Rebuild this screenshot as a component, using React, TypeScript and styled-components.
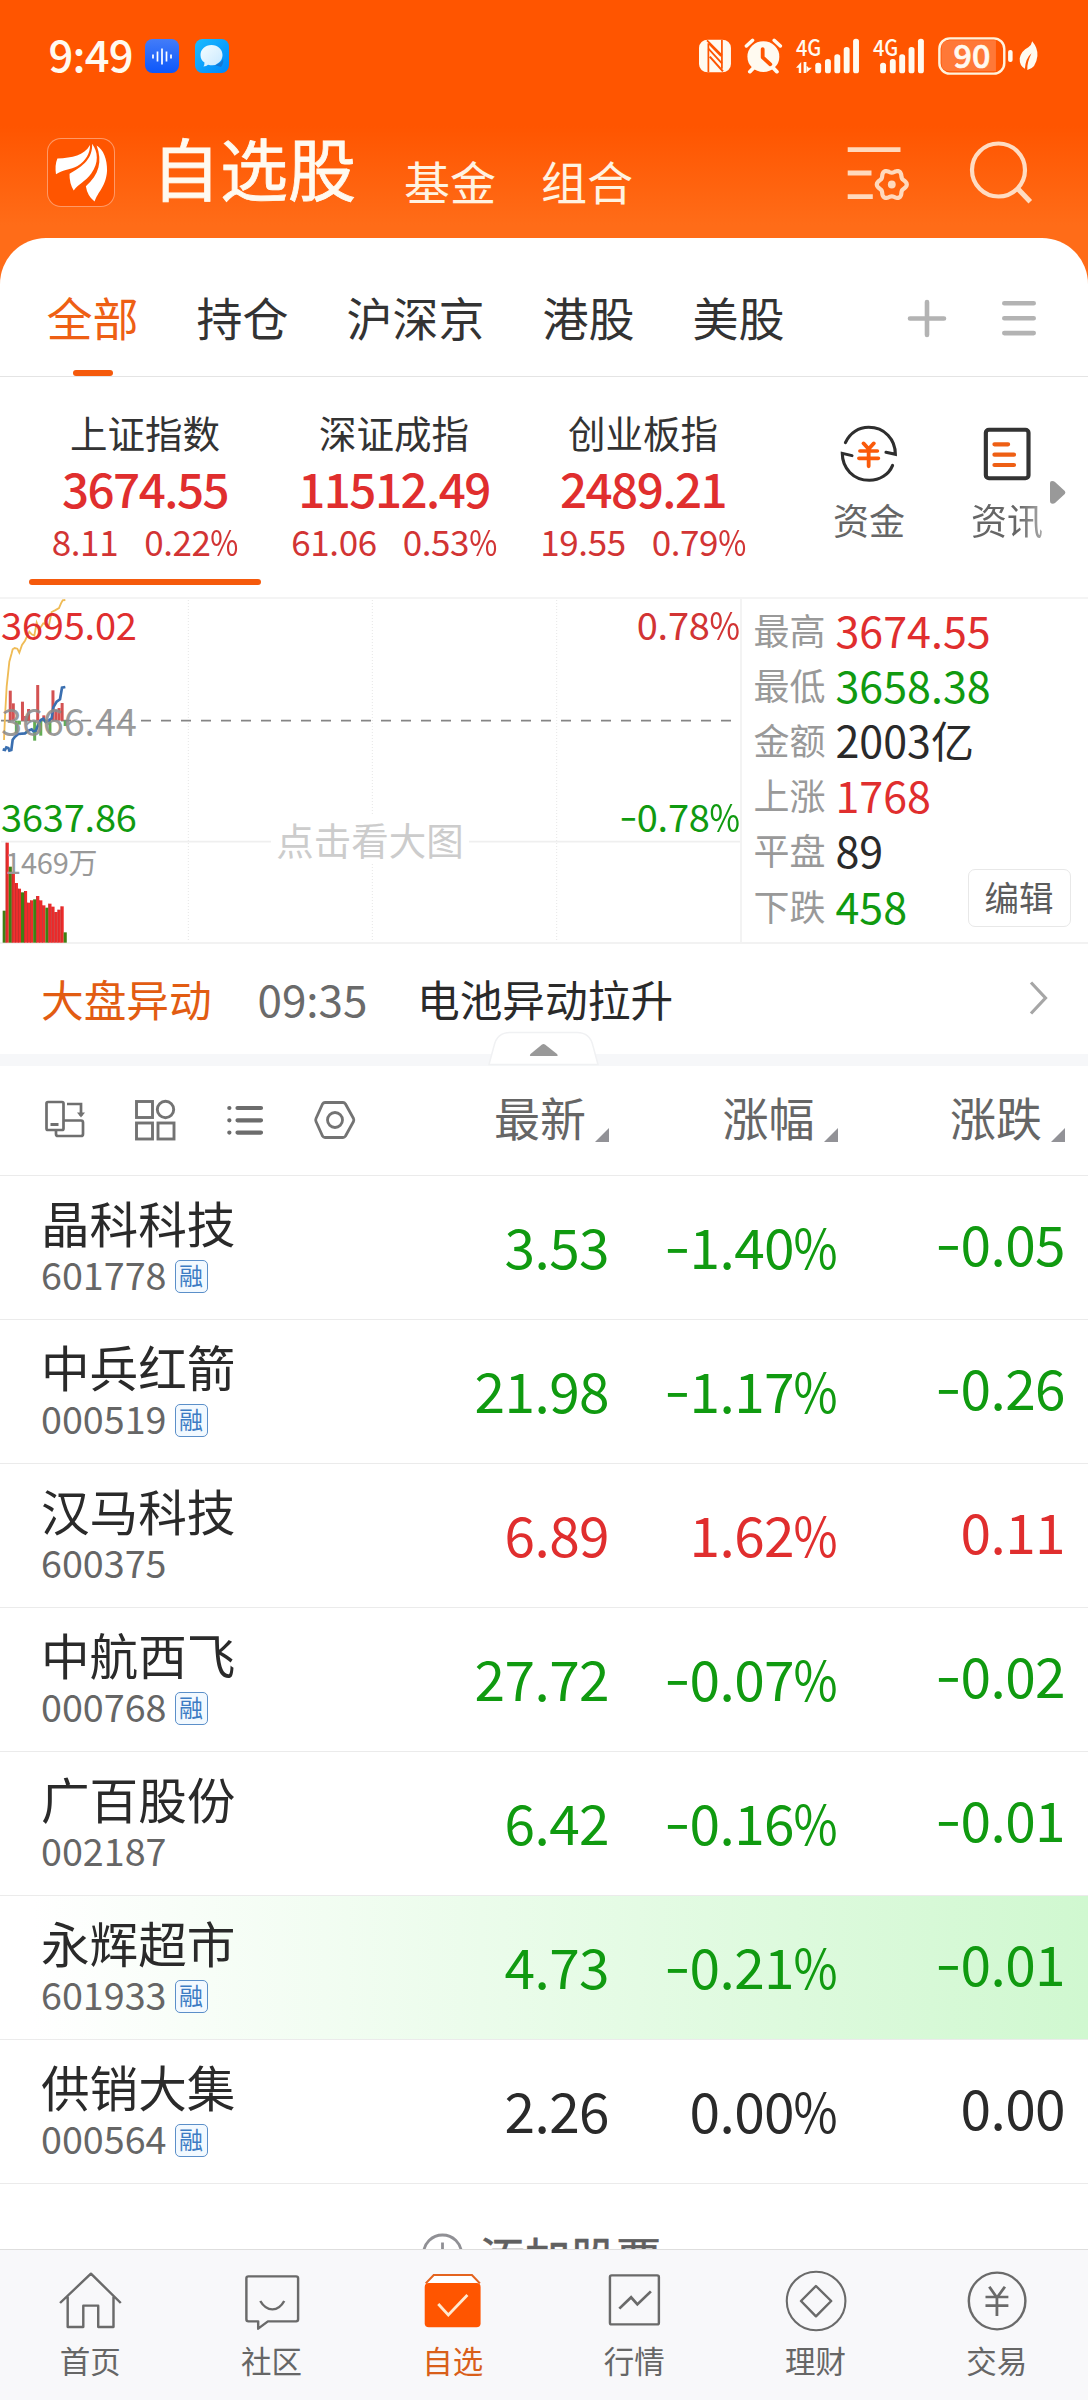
import React from "react";
import styled, { createGlobalStyle } from "styled-components";

const RED = "#e02e2e";
const GREEN = "#109a10";
const INK = "#2a2a2a";
const ORANGE = "#f55a0c";

type Trend = "up" | "down" | "flat";
const trendColor = (t: Trend) => (t === "up" ? RED : t === "down" ? GREEN : INK);

const GlobalStyle = createGlobalStyle`
  html, body { margin: 0; padding: 0; background: #fff; }
  * { box-sizing: border-box; }
  body { font-family: "Noto Sans CJK SC", "Noto Sans", sans-serif; }
`;

const Screen = styled.div`
  width: 1088px;
  height: 2400px;
  overflow: hidden;
  display: flex;
  flex-direction: column;
  background: linear-gradient(to bottom, #ff5500 0, #ff5500 126px, #ff6c18 225px, #ff6c18 300px);
  color: ${INK};
  white-space: nowrap;
`;

const Icon = styled.svg`
  display: block;
  flex: none;
  overflow: visible;
`;

/* Signs are drawn longer and percent marks narrower than the body face has them. */
const Sign = styled.span`
  display: inline-block;
  transform: translateY(-0.055em) scaleX(1.35);
  transform-origin: right center;
  margin-left: 0.12em;
`;
const Percent = styled.span`
  display: inline-block;
  transform: scaleX(0.87);
  transform-origin: right center;
  margin-left: -0.12em;
`;
const Num = ({ value }: { value: string }) => {
  const negative = value.startsWith("-");
  const percent = value.endsWith("%");
  return (
    <span>
      {negative && <Sign>-</Sign>}
      {value.replace(/[-%]/g, "")}
      {percent && <Percent>%</Percent>}
    </span>
  );
};

/* ---------- status bar ---------- */
const StatusBar = styled.header`
  height: 112px;
  flex: none;
  display: flex;
  align-items: center;
  padding: 0 50px 0 48.5px;
`;
const Clock = styled.span`
  font-size: 43.5px;
  line-height: 50px;
  font-weight: 500;
  letter-spacing: -0.8px;
  color: #fffaf0;
  margin-top: -5px;
  margin-right: 12px;
`;
const AppBadges = styled.div`
  display: flex;
  gap: 16px;
  flex: 1;
`;
const StatusIcons = styled.div`
  display: flex;
  gap: 13.8px;
`;
const BatteryGroup = styled.div`
  display: flex;
  gap: 5.5px;
`;

/* ---------- title row ---------- */
const TitleRow = styled.div`
  height: 126px;
  flex: none;
  display: flex;
  align-items: flex-start;
  padding: 0 55.4px 0 46.5px;
`;
const Logo = styled.div`
  width: 68px;
  height: 69px;
  margin: 26px 37.5px 0 0;
  border-radius: 14px;
  border: 1px solid rgba(255, 255, 255, 0.4);
  background: #ff5500;
  display: flex;
`;
const MainTitle = styled.h1`
  margin: 20.5px 48px 0 0;
  font-size: 68px;
  line-height: 67px;
  font-weight: 400;
  -webkit-text-stroke: 0.8px #fffaf0;
  color: #fffaf0;
`;
const SubTitle = styled.span`
  margin: 45.4px 45px 0 0;
  font-size: 46px;
  line-height: 46px;
  color: #fff3e2;
`;
const TitleTools = styled.div`
  margin-left: auto;
  padding-top: 28px;
  display: flex;
  align-items: center;
  gap: 58.6px;
`;

/* ---------- sheet and tabs ---------- */
const Sheet = styled.main`
  flex: 1;
  min-height: 0;
  display: flex;
  flex-direction: column;
  background: #fff;
  border-radius: 46px 46px 0 0;
`;
const TabBar = styled.nav`
  height: 139px;
  flex: none;
  display: flex;
  align-items: stretch;
  gap: 58px;
  padding: 0 51px 0 46.5px;
  border-bottom: 1px solid #e4e4e4;
`;
const Tab = styled.span<{ $active?: boolean }>`
  position: relative;
  padding-top: 55.4px;
  font-size: 46px;
  line-height: 46px;
  color: ${(p) => (p.$active ? "#ee5f14" : "#333")};
  &::after {
    content: "";
    display: ${(p) => (p.$active ? "block" : "none")};
    position: absolute;
    left: calc(50% - 20px);
    bottom: 0;
    width: 40px;
    height: 6px;
    border-radius: 3px;
    background: ${ORANGE};
  }
`;
const TabTools = styled.div`
  margin-left: auto;
  padding-top: 60px;
  display: flex;
  gap: 54px;
`;

/* ---------- index strip ---------- */
const IndexStrip = styled.section`
  position: relative;
  height: 220px;
  flex: none;
  display: flex;
  padding-left: 20.5px;
`;
const IndexCell = styled.div<{ $active?: boolean }>`
  position: relative;
  width: 249px;
  padding-top: 33.4px;
  display: flex;
  flex-direction: column;
  align-items: center;
  &::after {
    content: "";
    display: ${(p) => (p.$active ? "block" : "none")};
    position: absolute;
    left: 8.5px;
    bottom: 12px;
    width: 232px;
    height: 6px;
    border-radius: 3px;
    background: ${ORANGE};
  }
`;
const IndexName = styled.span`
  font-size: 37.5px;
  line-height: 44px;
  color: #333;
`;
const IndexValue = styled.strong`
  margin-top: 5.3px;
  font-size: 47.5px;
  line-height: 56px;
  font-weight: 500;
  letter-spacing: -1.5px;
  color: ${RED};
`;
const IndexDelta = styled.span`
  margin-top: 5.8px;
  display: flex;
  gap: 26px;
  font-size: 35px;
  letter-spacing: -0.4px;
  line-height: 40px;
  color: #d23434;
`;
const Shortcuts = styled.div`
  margin-left: 32.5px;
  padding-top: 47px;
  display: flex;
`;
const Shortcut = styled.div`
  width: 138px;
  display: flex;
  flex-direction: column;
  align-items: center;
`;
const ShortcutLabel = styled.span<{ $fade?: boolean }>`
  margin-top: 15px;
  font-size: 36px;
  line-height: 40px;
  color: #666;
  ${(p) => p.$fade && "mask-image: linear-gradient(to right, #000 65%, rgba(0,0,0,.55) 100%);"}
`;
const MoreArrow = styled(Icon)`
  position: absolute;
  top: 104px;
  right: 22.5px;
`;

/* ---------- mini chart ---------- */
const ChartRow = styled.section`
  height: 347px;
  flex: none;
  display: flex;
  border-top: 2px solid #f4f4f4;
  border-bottom: 2px solid #f2f2f2;
`;
const ChartBox = styled.div`
  position: relative;
  width: 742px;
  border-right: 2px solid #f3f3f3;
`;
const ChartArt = styled(Icon)`
  margin: -2px 0 0 1px;
`;
const AxisLabel = styled.span<{ $top: number; $color: string; $right?: boolean; $small?: boolean }>`
  position: absolute;
  top: ${(p) => p.$top}px;
  ${(p) => (p.$right ? "right: 0" : p.$small ? "left: 5px" : "left: 1px")};
  font-size: ${(p) => (p.$small ? 29 : 38)}px;
  letter-spacing: -0.2px;
  line-height: 40px;
  color: ${(p) => p.$color};
`;
const ChartHint = styled.span`
  position: absolute;
  left: 271px;
  top: 217px;
  width: 198px;
  text-align: center;
  font-size: 37.5px;
  line-height: 46px;
  color: #ccc;
  background: #fff;
`;
const StatsPanel = styled.div`
  position: relative;
  flex: 1;
  padding: 2px 0 0 11.5px;
`;
const StatLine = styled.div`
  height: 55.2px;
  display: flex;
  align-items: center;
`;
const StatLabel = styled.span`
  width: 82px;
  font-size: 36px;
  line-height: 50px;
  color: #999;
`;
const StatValue = styled.span<{ $t: Trend }>`
  font-size: 43px;
  line-height: 50px;
  color: ${(p) => trendColor(p.$t)};
`;
const EditButton = styled.button`
  position: absolute;
  left: 225.5px;
  top: 270px;
  width: 103px;
  height: 58px;
  padding: 0 0 4px;
  border: 1px solid #e8e8e8;
  border-radius: 7px;
  background: #fff;
  font-family: inherit;
  font-size: 34.5px;
  line-height: 52px;
  color: #5c5c5c;
`;

/* ---------- news line ---------- */
const NewsRow = styled.section`
  height: 110px;
  flex: none;
  display: flex;
  align-items: center;
  padding: 0 39px 3px 41px;
  font-size: 42.7px;
  line-height: 50px;
`;
const NewsTag = styled.span`
  width: 216.5px;
  color: #e25c12;
`;
const NewsTime = styled.span`
  width: 159.5px;
  font-size: 44px;
  color: #6a6a6a;
`;
const NewsText = styled.span`
  flex: 1;
`;
const Band = styled.div`
  position: relative;
  height: 12px;
  flex: none;
  background: #f6f7f9;
`;
const CollapseHandle = styled(Icon)`
  position: absolute;
  left: 488px;
  top: -23px;
`;

/* ---------- table ---------- */
const COLUMNS = "340px 228px 228.5px 227.5px";
const TableHead = styled.div`
  height: 110px;
  flex: none;
  display: grid;
  grid-template-columns: ${COLUMNS};
  align-items: center;
  padding-left: 41px;
  border-bottom: 1px solid #ebebeb;
`;
const ViewTools = styled.div`
  display: flex;
  gap: 46px;
  padding-bottom: 2px;
`;
const SortHead = styled.div`
  display: flex;
  justify-content: flex-end;
  align-items: center;
  gap: 9px;
  font-size: 46px;
  line-height: 50px;
  padding-bottom: 9px;
  color: #666;
  svg { margin-top: 38px; }
`;
const StockRow = styled.div<{ $lit?: boolean }>`
  height: 144px;
  flex: none;
  display: grid;
  grid-template-columns: ${COLUMNS};
  align-items: center;
  padding-left: 41px;
  border-bottom: 1px solid #ebebeb;
  ${(p) => p.$lit && "background: linear-gradient(to right, #fff 3%, #d0f8d0 100%);"}
`;
const StockName = styled.div`
  font-size: 48.6px;
  line-height: 50px;
  margin-top: 2px;
`;
const StockMeta = styled.div`
  display: flex;
  align-items: center;
  gap: 8px;
  height: 49px;
  margin-top: 5px;
`;
const StockCode = styled.span`
  font-size: 37.7px;
  line-height: 40px;
  margin-top: -5px;
  color: #666;
`;
const MarginBadge = styled.span`
  width: 33px;
  height: 33px;
  border: 1.5px solid #5b8fc9;
  border-radius: 5px;
  background: #f2f9ff;
  font-size: 24px;
  line-height: 28px;
  text-align: center;
  color: #3d7cc4;
`;
const Figure = styled.div<{ $t: Trend; $raise?: boolean }>`
  text-align: right;
  font-size: 55px;
  letter-spacing: -0.6px;
  line-height: 60px;
  padding-bottom: ${(p) => (p.$raise ? 11 : 5)}px;
  color: ${(p) => trendColor(p.$t)};
`;
const AddRow = styled.div`
  height: 65px;
  flex: none;
  overflow: hidden;
  display: flex;
  justify-content: center;
  gap: 16px;
  padding: 49px 4px 0 0;
  font-size: 45.5px;
  line-height: 46px;
  color: #606060;
  -webkit-text-stroke: 0.6px #606060;
`;

/* ---------- bottom navigation ---------- */
const BottomNav = styled.nav`
  height: 151px;
  flex: none;
  display: grid;
  grid-template-columns: repeat(6, 1fr);
  border-top: 1px solid #dedede;
  background: #f8f8fa;
`;
const NavItem = styled.div<{ $active?: boolean }>`
  padding-top: 18px;
  display: flex;
  flex-direction: column;
  align-items: center;
  font-size: 30.5px;
  line-height: 36px;
  color: ${(p) => (p.$active ? "#d95f1a" : "#666")};
  gap: 9.5px;
`;
const NavLabel = styled.span`
  margin-left: -1px;
`;

/* ---------- data ---------- */
const indices = [
  { name: "上证指数", value: "3674.55", diff: "8.11", pct: "0.22%" },
  { name: "深证成指", value: "11512.49", diff: "61.06", pct: "0.53%" },
  { name: "创业板指", value: "2489.21", diff: "19.55", pct: "0.79%" },
];
const stats: { label: string; value: string; t: Trend }[] = [
  { label: "最高", value: "3674.55", t: "up" },
  { label: "最低", value: "3658.38", t: "down" },
  { label: "金额", value: "2003亿", t: "flat" },
  { label: "上涨", value: "1768", t: "up" },
  { label: "平盘", value: "89", t: "flat" },
  { label: "下跌", value: "458", t: "down" },
];
const stocks: { name: string; code: string; margin?: boolean; price: string; pct: string; diff: string; t: Trend; lit?: boolean }[] = [
  { name: "晶科科技", code: "601778", margin: true, price: "3.53", pct: "-1.40%", diff: "-0.05", t: "down" },
  { name: "中兵红箭", code: "000519", margin: true, price: "21.98", pct: "-1.17%", diff: "-0.26", t: "down" },
  { name: "汉马科技", code: "600375", price: "6.89", pct: "1.62%", diff: "0.11", t: "up" },
  { name: "中航西飞", code: "000768", margin: true, price: "27.72", pct: "-0.07%", diff: "-0.02", t: "down" },
  { name: "广百股份", code: "002187", price: "6.42", pct: "-0.16%", diff: "-0.01", t: "down" },
  { name: "永辉超市", code: "601933", margin: true, price: "4.73", pct: "-0.21%", diff: "-0.01", t: "down", lit: true },
  { name: "供销大集", code: "000564", margin: true, price: "2.26", pct: "0.00%", diff: "0.00", t: "flat" },
];

/* volume bars: top edge and colour (r/g), 9.15 units apart */
const volume: [number, "r" | "g"][] = [
  [962, "g"], [758, "r"], [830, "g"], [850, "r"], [879, "r"], [896, "r"], [907, "g"], [903, "r"], [938, "r"], [931, "r"], [928, "g"],
  [918, "r"], [931, "r"], [946, "r"], [953, "g"], [941, "r"], [950, "r"], [966, "r"], [959, "r"], [949, "r"], [1027, "g"],
];
/* momentum bars around the zero line: slot, end */
const momentum: [number, number][] = [
  [2, 302], [3, 340], [4, 430], [5, 404], [6, 335], [7, 378], [8, 357], [10, 452], [11, 285], [12, 437], [13, 376],
  [15, 430], [16, 301], [17, 360], [18, 354], [19, 339], [20, 408],
];
const ZERO = 392;

const GEAR = (() => {
  let d = "";
  for (let i = 0; i <= 72; i++) {
    const a = (i / 72) * Math.PI * 2;
    const r = 13.4 + 1.6 * Math.cos(6 * a);
    d += `${i ? "L" : "M"}${(r * Math.cos(a)).toFixed(2)} ${(r * Math.sin(a)).toFixed(2)}`;
  }
  return d + "Z";
})();

const Signal = ({ x, data }: { x: number[]; data?: boolean }) => {
  const tops = [188, 177, 163, 141, 116];
  const left = data ? 726 : 948;
  return (
    <Icon width={data ? 63.5 : 51.4} height="40" viewBox={data ? "726 108 183 120" : "948 108 148 120"} preserveAspectRatio="none" fill="#fffaf0">
      <text x={left} y="167" fontSize="68" fontWeight="500" textLength="73" lengthAdjust="spacingAndGlyphs">4G</text>
      {x.map((c, i) => (
        <rect key={c} x={c - 8.5} y={tops[i]} width="17" height={220 - tops[i]} rx="8" />
      ))}
      {data && <path d="M726 203L741 186V219H734V203ZM748 186H755V219L772 203H762Z M748 186h8v33h-8z" />}
    </Icon>
  );
};

const SortMark = () => (
  <Icon width="14" height="14" viewBox="0 0 14 14"><path d="M14 0V14H0Z" fill="#929297" /></Icon>
);

const navItems = [
  {
    label: "首页", vb: "169 324 184.4 192",
    art: <path d="M172 429L261 341L347 429M194 410V501H239V437H282V501H326V410" strokeLinejoin="round" />,
  },
  {
    label: "社区", vb: "688.6 324 184.4 192",
    art: <><path d="M713 349H850Q856 349 856 355V478Q856 484 850 484H769L741 506V484H713Q707 484 707 478V355Q707 349 713 349Z" strokeLinejoin="round" /><path d="M747 423Q761 448 782 448Q803 448 816 423" /></>,
  },
  {
    label: "自选", vb: "1211.3 324 184.4 192", active: true,
    art: <><path d="M1225 370L1248 345H1358L1381 370" stroke="#e4641f" strokeWidth="6" fill="#fff" /><rect x="1222" y="369" width="161" height="133" rx="12" fill="#ff5500" stroke="none" /><path d="M1261 432L1290 465L1345 405" stroke="#ffe9cf" strokeWidth="8" /></>,
  },
  {
    label: "行情", vb: "166 324 184.4 192",
    art: <><rect x="186" y="346" width="141" height="147" rx="5" /><path d="M213 446L247 412L265 433L304 394" strokeWidth="8" /></>,
  },
  {
    label: "理财", vb: "689 324 184.4 192",
    art: <><ellipse cx="781.500" cy="423" rx="84.500" ry="88" strokeWidth="6" /><path d="M781 378L825 423L781 469L738 423Z" strokeLinejoin="round" /></>,
  },
  {
    label: "交易", vb: "1212 324 184.4 192",
    art: <><ellipse cx="1304.500" cy="423" rx="81.500" ry="85" /><path d="M1282 380L1304 413L1327 380M1271 411H1337M1271 437H1337M1304 411V468" strokeWidth="8" /></>,
  },
];

export default function App() {
  return (
    <>
      <GlobalStyle />
      <Screen>
        <StatusBar>
          <Clock>9:49</Clock>
          <AppBadges>
            <Icon width="34" height="34" viewBox="0 0 34 34">
              <defs><linearGradient id="voice" x1="0" y1="0" x2="0" y2="1"><stop offset="0" stopColor="#437cf8" /><stop offset="1" stopColor="#0c57fb" /></linearGradient></defs>
              <rect width="34" height="34" rx="7.500" fill="url(#voice)" />
              <path d="M8 15.500V19.500M12.500 12.500V22.500M17 9.500V25.500M21.500 12.500V22.500M26 15.500V19.500" stroke="#fff" strokeWidth="1.700" />
            </Icon>
            <Icon width="34" height="34" viewBox="0 0 34 34">
              <defs>
                <linearGradient id="chat" x1="0" y1="0" x2="1" y2="1"><stop offset="0" stopColor="#1bbcff" /><stop offset="1" stopColor="#0086fa" /></linearGradient>
                <linearGradient id="bubble" x1="0" y1="0" x2="1" y2="1"><stop offset="0" stopColor="#f4fdff" /><stop offset="1" stopColor="#c8e8ff" /></linearGradient>
              </defs>
              <rect width="34" height="34" rx="7.500" fill="url(#chat)" />
              <path d="M19 26Q26 25 28 20Q29 24 26 28Q23 27 19 26Z" fill="#1577d2" />
              <path d="M16.500 6C10 6 5.500 10.500 5.500 16C5.500 19.500 7 22 9.500 23.500Q9.500 26 8.500 27.500Q11.500 27.300 13 25.700Q20 27.600 24 23.600Q27.500 20.500 27.500 16C27.500 10.500 23 6 16.500 6Z" fill="url(#bubble)" />
            </Icon>
          </AppBadges>
          <StatusIcons>
            <Icon width="32.3" height="40" viewBox="447 108 93 120" preserveAspectRatio="none">
              <rect x="447" y="119" width="92" height="98" rx="25" fill="#fffaf0" />
              <path d="M474 217V130M513 119V206" stroke="#ff5500" strokeWidth="5" />
              <path d="M470 121L513 166M474 146L513 190" stroke="#ff5500" strokeWidth="5" fill="none" />
              <path d="M476 131L511 168M478 170L516 214" stroke="#ff5500" strokeWidth="6" fill="none" />
            </Icon>
            <Icon width="37.1" height="40" viewBox="580 108 107 120" preserveAspectRatio="none">
              <ellipse cx="633" cy="170" rx="46" ry="46" fill="#fffaf0" />
              <path d="M584 138L602 121M664 121L682 138" stroke="#fffaf0" strokeWidth="10" strokeLinecap="round" />
              <path d="M605 203L594 215M661 203L672 215" stroke="#fffaf0" strokeWidth="11" strokeLinecap="round" />
              <path d="M631 147V172L653 193" fill="none" stroke="#ff5500" strokeWidth="11" strokeLinecap="round" strokeLinejoin="round" />
            </Icon>
            <Signal data x={[790, 818, 845, 872, 899]} />
            <Signal x={[977, 1005, 1032, 1059, 1086]} />
            <BatteryGroup>
              <Icon width="75.3" height="40" viewBox="1136 108 217 120" preserveAspectRatio="none">
                <path d="M1170 121H1303V214H1170Q1146 214 1146 190V145Q1146 121 1170 121Z" fill="#ff7837" />
                <rect x="1140" y="115" width="187" height="106" rx="30" ry="31" fill="none" stroke="#fff3dd" strokeWidth="7" />
                <rect x="1338" y="150" width="13" height="36" rx="6" fill="#fffaf0" />
                <text x="1181" y="204" fontSize="98" fontWeight="500" fill="#fffaf0" stroke="#fffaf0" strokeWidth="2" textLength="106" lengthAdjust="spacingAndGlyphs">90</text>
              </Icon>
              <Icon width="19.1" height="40" viewBox="1369 108 55 120" preserveAspectRatio="none">
                <path d="M1407 124Q1424 145 1422 168Q1418 205 1393 210Q1391 190 1405 160Q1388 175 1386 206Q1370 198 1371 175Q1376 152 1396 142Q1405 136 1407 124Z" fill="#fffaf0" />
              </Icon>
            </BatteryGroup>
          </StatusIcons>
        </StatusBar>

        <TitleRow>
          <Logo>
            <Icon width="66" height="67" viewBox="137 418 190 199" preserveAspectRatio="none" fill="#fff">
              <path d="M258 436C240 468 208 474 164 476Q156 496 160 523C180 508 202 510 222 498C246 483 258 462 258 436Z" />
              <path d="M264 432C266 474 240 498 199 521Q198 548 211 571C224 552 244 546 262 520C284 488 281 456 264 432Z" />
              <path d="M277 437C294 484 284 524 246 558Q250 586 271 604C280 574 304 560 307 512C308 478 296 448 277 437Z" />
            </Icon>
          </Logo>
          <MainTitle>自选股</MainTitle>
          <SubTitle>基金</SubTitle>
          <SubTitle>组合</SubTitle>
          <TitleTools>
            <Icon width="64.2" height="64" viewBox="845.9 140 64.2 64" fill="none" stroke="#ffd9bd">
              <path d="M847.600 149.700H900.400M847.600 173H871.400M847.600 196.600H872.700" strokeWidth="4.800" />
              <g transform="translate(891.700 184.500)"><path d={GEAR} strokeWidth="4.200" strokeLinejoin="round" /><circle r="3.900" fill="#ffd9bd" stroke="none" /></g>
            </Icon>
            <Icon width="63.800" height="64" viewBox="968.7 140 63.8 64" fill="none" stroke="#ffdcc2" strokeWidth="4.200">
              <circle cx="998.200" cy="170" r="26.500" />
              <path d="M1016.600 187.700L1030 201.700" strokeWidth="5" />
            </Icon>
          </TitleTools>
        </TitleRow>

        <Sheet>
          <TabBar>
            <Tab $active>全部</Tab>
            <Tab>持仓</Tab>
            <Tab>沪深京</Tab>
            <Tab>港股</Tab>
            <Tab>美股</Tab>
            <TabTools>
              <Icon width="40" height="40" viewBox="0 0 40 40" stroke="#b3b3b3" strokeWidth="4.600" strokeLinecap="round"><path d="M3 20.500H37M20 4V37" /></Icon>
              <Icon width="36" height="40" viewBox="0 0 36 40" stroke="#b3b3b3" strokeWidth="4.600" strokeLinecap="round"><path d="M3.300 5.300H32.700M3.300 20.300H32.700M3.300 35.100H32.700" /></Icon>
            </TabTools>
          </TabBar>

          <IndexStrip>
            {indices.map((it, i) => (
              <IndexCell key={it.name} $active={i === 0}>
                <IndexName>{it.name}</IndexName>
                <IndexValue>{it.value}</IndexValue>
                <IndexDelta><Num value={it.diff} /><Num value={it.pct} /></IndexDelta>
              </IndexCell>
            ))}
            <Shortcuts>
              <Shortcut>
                <Icon width="60" height="60" viewBox="850.5 522 173 180" preserveAspectRatio="none" fill="none" strokeWidth="9" strokeLinecap="round">
                  <path d="M869 578C882 548 908 532 936 532C982 532 1013 568 1013 613L986 607" stroke="#2e2e2e" />
                  <path d="M1005 646C994 674 968 691 938 691C892 691 860 655 860 610L888 617" stroke="#2e2e2e" />
                  <path d="M921 580L936 597L951 580M911 603H961M908 625H964M936 600V649" stroke="#fa5a0a" strokeWidth="11" />
                </Icon>
                <ShortcutLabel>资金</ShortcutLabel>
              </Shortcut>
              <Shortcut>
                <Icon width="60" height="60" viewBox="1247.5 522 173 180" preserveAspectRatio="none" fill="none" strokeWidth="12" strokeLinecap="round">
                  <rect x="1273" y="539" width="123" height="146" rx="9" stroke="#333" />
                  <path d="M1298 583H1337M1298 614H1354M1298 645H1354" stroke="#ee5f14" strokeWidth="12.500" />
                </Icon>
                <ShortcutLabel $fade>资讯</ShortcutLabel>
              </Shortcut>
            </Shortcuts>
            <MoreArrow width="15.500" height="23" viewBox="0 0 15.5 23"><path d="M2 0Q4 0 5 1L14.800 10Q16 11.500 14.800 13L5 22Q3.500 23 1.500 22.500Q0 22 0 20V2Q0 0 2 0Z" fill="#999" /></MoreArrow>
          </IndexStrip>

          <ChartRow>
            <ChartBox>
              <ChartArt width="739" height="346.700" viewBox="3 21 2217 1040" fill="none">
                <path d="M565 30V1055M1117 30V1055M1670 30V1055" stroke="#e6e6e6" strokeWidth="3" strokeDasharray="3 6" />
                <path d="M3 755H2220" stroke="#efefef" strokeWidth="5" />
                <path d="M3 392H2200" stroke="#858585" strokeWidth="5.500" strokeDasharray="30 30" />
                {momentum.map(([slot, end]) => (
                  <rect key={slot} x={8 + slot * 9.15} width="9" y={Math.min(ZERO, end)} height={Math.abs(end - ZERO)} fill={end < ZERO ? "#d35252" : "#63ad55"} />
                ))}
                <path d="M12 450L15 380L20 290L28 215L35 190L38 178L44 174L52 176L58 188L66 165L75 152L88 125L95 133L103 137L110 98L118 118L130 100L147 105L155 66L165 61L177 54L183 40L188 31L196 30" stroke="#efbb55" strokeWidth="5.500" />
                <path d="M8 478L15 480L19 472L25 474L28 482L34 480L38 449L45 440L55 432L75 430L85 422L95 418L100 424L108 422L115 402L122 390L130 386L137 396L145 392L155 385L160 352L170 335L180 328L186 293L196 291" stroke="#3a6fb0" strokeWidth="8" />
                {volume.map(([top, c], i) => (
                  <g key={i}>
                    <rect x={8 + i * 9.15} width="9.300" y={top} height={1058 - top} fill={c === "r" ? "#ee2b2b" : "#3e8012"} />
                    {c === "r" && <rect x={8 + i * 9.15} width="2" y={top} height={1058 - top} fill="#b23030" />}
                  </g>
                ))}
              </ChartArt>
              <AxisLabel $top={5} $color={RED}>3695.02</AxisLabel>
              <AxisLabel $top={101} $color="rgba(140,140,140,.88)">3666.44</AxisLabel>
              <AxisLabel $top={197} $color={GREEN}>3637.86</AxisLabel>
              <AxisLabel $top={242} $color="#999" $small>1469万</AxisLabel>
              <AxisLabel $top={5} $color="#d23434" $right><Num value="0.78%" /></AxisLabel>
              <AxisLabel $top={197} $color={GREEN} $right><Num value="-0.78%" /></AxisLabel>
              <ChartHint>点击看大图</ChartHint>
            </ChartBox>
            <StatsPanel>
              {stats.map((s) => (
                <StatLine key={s.label}><StatLabel>{s.label}</StatLabel><StatValue $t={s.t}>{s.value}</StatValue></StatLine>
              ))}
              <EditButton>编辑</EditButton>
            </StatsPanel>
          </ChartRow>

          <NewsRow>
            <NewsTag>大盘异动</NewsTag>
            <NewsTime>09:35</NewsTime>
            <NewsText>电池异动拉升</NewsText>
            <Icon width="20" height="34" viewBox="0 0 20 34" fill="none" stroke="#a6a6a6" strokeWidth="3.200"><path d="M2 1.500L16.500 17L2 32.500" /></Icon>
          </NewsRow>
          <Band>
            <CollapseHandle width="111" height="35" viewBox="0 0 111 35">
              <path d="M1 33.500L6 15Q9 1.500 22 1.500H89Q102 1.500 105 15L110 33.500Z" fill="#fff" stroke="#f0f1f3" strokeWidth="1.500" />
              <path d="M54 13.500Q55.500 12.500 57 13.500L69 23Q70.500 25 68.500 25H43Q41 25 42.500 23Z" fill="#999" />
            </CollapseHandle>
          </Band>

          <TableHead>
            <ViewTools>
              <Icon width="44" height="44" viewBox="0 0 44 44" fill="none" stroke="#6f6f6f" strokeWidth="2.700">
                <rect x="5.500" y="4" width="17" height="28" rx="1.500" /><path d="M9.500 26.500H17.500" strokeWidth="3" />
                <path d="M15 32V36Q15 38 17 38H40Q42 38 42 36V24.500Q42 22.500 40 22.500H23M26 6H40V18" /><path d="M36 14.500H44L40 19.500Z" fill="#737373" stroke="none" />
              </Icon>
              <Icon width="44" height="44" viewBox="0 0 44 44" fill="none" stroke="#737373" strokeWidth="2.900">
                <rect x="5.500" y="3.500" width="16" height="16" /><circle cx="34.500" cy="11.500" r="8.200" /><rect x="5.500" y="25" width="16" height="16" /><rect x="27" y="25" width="16" height="16" />
              </Icon>
              <Icon width="44" height="44" viewBox="0 0 44 44" fill="none" stroke="#6c6c6c" strokeWidth="4.200" strokeLinecap="round">
                <path d="M16.500 10H40M16.500 22.300H40M16.500 34.600H40M8.300 10h.1M8.300 22.300h.1M8.300 34.600h.1" />
              </Icon>
              <Icon width="44" height="44" viewBox="0 0 44 44" fill="none" stroke="#737373" strokeWidth="2.800" strokeLinejoin="round">
                <path d="M14 4.500H32Q33.500 4.500 34.500 6L42.500 20.500Q43.200 22 42.500 23.500L34.500 38Q33.500 39.500 32 39.500H14Q12.500 39.500 11.500 38L5 23.500Q4.300 22 5 20.500L11.500 6Q12.500 4.500 14 4.500Z" /><circle cx="24" cy="22" r="7.500" />
              </Icon>
            </ViewTools>
            <SortHead>最新<SortMark /></SortHead>
            <SortHead>涨幅<SortMark /></SortHead>
            <SortHead>涨跌<SortMark /></SortHead>
          </TableHead>

          {stocks.map((s) => (
            <StockRow key={s.code} $lit={s.lit}>
              <div>
                <StockName>{s.name}</StockName>
                <StockMeta><StockCode>{s.code}</StockCode>{s.margin && <MarginBadge>融</MarginBadge>}</StockMeta>
              </div>
              <Figure $t={s.t}><Num value={s.price} /></Figure>
              <Figure $t={s.t}><Num value={s.pct} /></Figure>
              <Figure $t={s.t} $raise><Num value={s.diff} /></Figure>
            </StockRow>
          ))}

          <AddRow>
            <Icon width="41" height="41" viewBox="0 0 41 41" fill="none" stroke="#909095" strokeWidth="2.800"><circle cx="20.500" cy="21" r="19" /><path d="M20.500 9.500V32M9 21H32" /></Icon>
            添加股票
          </AddRow>

          <BottomNav>
            {navItems.map((n) => (
              <NavItem key={n.label} $active={n.active}>
                <Icon width="64" height="64" viewBox={n.vb} preserveAspectRatio="none" fill="none" stroke="#6a6a6a" strokeWidth="7">{n.art}</Icon>
                <NavLabel>{n.label}</NavLabel>
              </NavItem>
            ))}
          </BottomNav>
        </Sheet>
      </Screen>
    </>
  );
}
